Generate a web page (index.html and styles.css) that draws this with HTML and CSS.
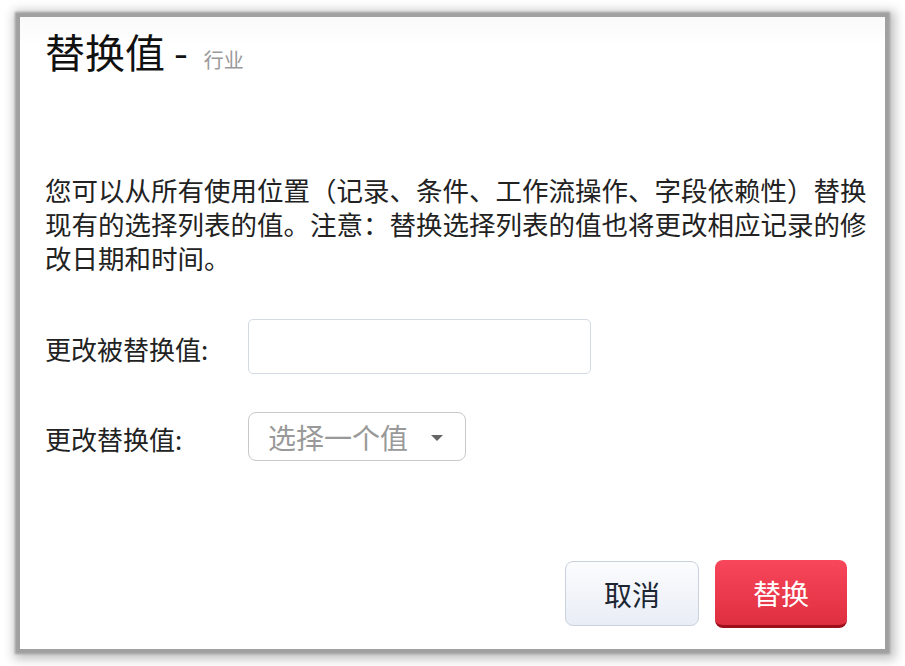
FILE: index.html
```html
<!DOCTYPE html>
<html lang="zh-CN">
<head>
<meta charset="utf-8">
<title>替换值</title>
<link rel="stylesheet" href="styles.css">
</head>
<body>
<div class="dialog">
  <div class="dialog-header">
    <span class="title">替换值 -</span>
    <span class="subtitle">行业</span>
  </div>
  <p class="desc">您可以从所有使用位置（记录、条件、工作流操作、字段依赖性）替换现有的选择列表的值。注意：替换选择列表的值也将更改相应记录的修改日期和时间。</p>
  <div class="form">
    <div class="row">
      <label class="label">更改被替换值:</label>
      <div class="input"></div>
    </div>
    <div class="row">
      <label class="label">更改替换值:</label>
      <div class="select">
        <span class="placeholder">选择一个值</span>
        <span class="caret"></span>
      </div>
    </div>
  </div>
  <div class="footer">
    <button class="btn btn-cancel">取消</button>
    <button class="btn btn-primary">替换</button>
  </div>
</div>
</body>
</html>
```

FILE: styles.css
```css
html, body {
  margin: 0;
  padding: 0;
  background: #ffffff;
  width: 905px;
  height: 666px;
  overflow: hidden;
}
body {
  font-family: "Noto Sans CJK SC", "Noto Sans", sans-serif;
  color: #222;
}
.dialog {
  box-sizing: border-box;
  margin: 17px 0 0 20px;
  width: 865px;
  height: 632px;
  background: linear-gradient(#f9f9f9 0, #ffffff 28px);
  box-shadow: 0 0 2px 5px #a0a0a0, 2px 2px 10px 8px rgba(0, 0, 0, 0.25);
  padding: 14px 38px 21px 25px;
  display: flex;
  flex-direction: column;
}
.dialog-header {
  display: flex;
  align-items: baseline;
  line-height: 40px;
}
.title {
  font-size: 40px;
  color: #111;
}
.subtitle {
  font-size: 20px;
  color: #999;
  margin-left: 16px;
}
.desc {
  margin: 93px 0 0 0;
  width: 830px;
  font-size: 26.5px;
  line-height: 34px;
  color: #222;
}
.form {
  margin-top: 44px;
  display: flex;
  flex-direction: column;
  gap: 38px;
}
.row {
  display: flex;
  align-items: center;
}
.label {
  width: 203px;
  font-size: 26px;
  line-height: 30px;
  color: #222;
  padding-top: 4px;
}
.input {
  box-sizing: border-box;
  width: 343px;
  height: 55px;
  border: 1px solid #d3dae4;
  border-radius: 5px;
  background: #fff;
}
.select {
  box-sizing: border-box;
  width: 218px;
  height: 49px;
  border: 1px solid #c9c9c9;
  border-radius: 8px;
  background: #fff;
  display: flex;
  align-items: center;
  padding: 0 22px 0 19px;
}
.placeholder {
  font-size: 28px;
  line-height: 30px;
  color: #999;
  flex: 1;
}
.caret {
  width: 0;
  height: 0;
  border-left: 6px solid transparent;
  border-right: 6px solid transparent;
  border-top: 6px solid #666;
  margin-top: 3px;
}
.footer {
  margin-top: auto;
  display: flex;
  justify-content: flex-end;
  align-items: flex-start;
  gap: 16px;
}
.btn {
  font-family: "Noto Sans CJK SC", "Noto Sans", sans-serif;
  font-size: 28px;
  line-height: 30px;
  cursor: pointer;
  box-sizing: border-box;
}
.btn-cancel {
  width: 134px;
  height: 65px;
  margin-top: 1px;
  border: 1px solid #c9d1dd;
  border-radius: 8px;
  background: linear-gradient(#fbfcfe, #e9edf5);
  color: #1c2633;
}
.btn-primary {
  width: 132px;
  height: 68px;
  border: none;
  border-bottom: 3px solid #9e0f1c;
  border-radius: 8px;
  background: linear-gradient(#f8465a, #de2f40);
  color: #fff;
}
```
